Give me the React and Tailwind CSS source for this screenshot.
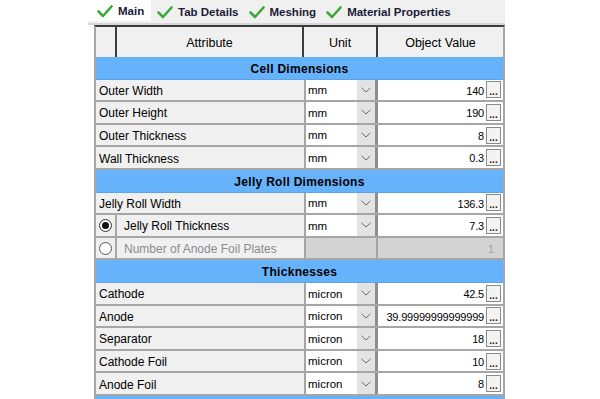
import React from 'react';

const Check = () => (
    <svg width="16" height="13" viewBox="0 0 16 13" className="shrink-0">
        <polyline points="1.5,6.5 6,11 14.5,1.5" fill="none" stroke="#3fa83a" strokeWidth="2.6" strokeLinecap="round" strokeLinejoin="round" />
    </svg>
);

const Chevron = () => (
    <svg width="10" height="6" viewBox="0 0 10 6">
        <polyline points="0.5,0.8 5,5 9.5,0.8" fill="none" stroke="#6b6b6b" strokeWidth="1" />
    </svg>
);

// table rows, top to bottom
const rows = [
    { band: 'Cell Dimensions' },
    { label: 'Outer Width', unit: 'mm', value: '140' },
    { label: 'Outer Height', unit: 'mm', value: '190' },
    { label: 'Outer Thickness', unit: 'mm', value: '8' },
    { label: 'Wall Thickness', unit: 'mm', value: '0.3' },
    { band: 'Jelly Roll Dimensions' },
    { label: 'Jelly Roll Width', unit: 'mm', value: '136.3' },
    { label: 'Jelly Roll Thickness', unit: 'mm', value: '7.3', radio: 'on' },
    { label: 'Number of Anode Foil Plates', value: '1', radio: 'off', disabled: true },
    { band: 'Thicknesses' },
    { label: 'Cathode', unit: 'micron', value: '42.5' },
    { label: 'Anode', unit: 'micron', value: '39.99999999999999' },
    { label: 'Separator', unit: 'micron', value: '18' },
    { label: 'Cathode Foil', unit: 'micron', value: '10' },
    { label: 'Anode Foil', unit: 'micron', value: '8' },
    { band: '' },
];

const tabs = ['Main', 'Tab Details', 'Meshing', 'Material Properties'];

const Row = ({ row }) => {
    if (row.band !== undefined) {
        return (
            <div className="h-[22.6px] shrink-0 bg-[#66b2fb] border-b border-[#5aa4ec] flex items-center justify-center pt-[2px] text-[12px] font-bold text-black tracking-[0.3px]">
                {row.band}
            </div>
        );
    }
    return (
        <div className="h-[22.6px] shrink-0 flex border-b-2 border-[#a6a6a6]">
            {row.radio ? (
                <>
                    <div className="w-[21px] shrink-0 bg-[#f0f0f0] border-r-2 border-[#a6a6a6] flex items-center justify-center">
                        <div className={`w-[13px] h-[13px] rounded-full border bg-white flex items-center justify-center ${row.radio === 'on' ? 'border-[#333]' : 'border-[#555]'}`}>
                            {row.radio === 'on' && <div className="w-[7px] h-[7px] rounded-full bg-[#111]" />}
                        </div>
                    </div>
                    <div className={`w-[187px] shrink-0 bg-[#f0f0f0] pl-[7px] pt-[2px] flex items-center text-[12px] ${row.disabled ? 'text-[#8c8c8c]' : 'text-black'}`}>
                        {row.label}
                    </div>
                </>
            ) : (
                <div className="w-[208px] shrink-0 bg-[#f0f0f0] pl-[3px] pt-[2px] flex items-center text-[12px] text-black">
                    {row.label}
                </div>
            )}
            {row.disabled ? (
                <>
                    <div className="w-[74px] shrink-0 bg-[#d3d3d3] border-l-2 border-r-2 border-[#a6a6a6]" />
                    <div className="flex-1 bg-[#d3d3d3] flex items-center justify-end pr-[9px] pt-[2px] text-[11px] text-[#a3a3a3]">
                        {row.value}
                    </div>
                </>
            ) : (
                <>
                    <div className="w-[74px] shrink-0 flex border-l-2 border-r-[3px] border-l-[#a6a6a6] border-r-[#8e8e8e]">
                        <div className="flex-1 bg-white pl-[2px] pt-[2px] flex items-center text-[11.5px] text-black">{row.unit}</div>
                        <div className="w-[18px] bg-[#e3e3e3] flex items-center justify-center">
                            <Chevron />
                        </div>
                    </div>
                    <div className="flex-1 bg-white flex items-center justify-end pr-[2px] gap-[2px]">
                        <span className="text-[11px] pt-[2px] text-black tracking-[-0.2px]">{row.value}</span>
                        <div className="w-[15px] h-[17px] border border-[#8a8a8a] bg-[#f3f3f3] flex items-end justify-center text-[10px] font-bold leading-[11px] text-[#222]">
                            ...
                        </div>
                    </div>
                </>
            )}
        </div>
    );
};

export default function App() {
    return (
        <div className="w-[600px] h-[399px] bg-white overflow-hidden" style={{ fontFamily: '"Liberation Sans", Arial, sans-serif' }}>
            <div className="ml-[88px] w-[417px] flex flex-col h-full">
                {/* Tab strip */}
                <div className="h-[23px] shrink-0 flex bg-[#f0f0f0] pt-[2px] text-[11.5px] font-bold text-[#1b1b3a]">
                    {tabs.map((t, i) => (
                        <div key={t} className={`flex items-center gap-[5px] h-full ${i === 0 ? 'bg-white pl-[9px] pr-[6px] w-[63px] -mt-[2px] pt-[2px] h-[23px]' : 'pl-[6px] pr-[4px]'}`}>
                            <Check />
                            <span>{t}</span>
                        </div>
                    ))}
                </div>
                <div className="h-[2px] shrink-0 bg-[#d7d7d7]" />

                {/* Table */}
                <div className="ml-[6px] flex-1 flex flex-col border-l-2 border-r-2 border-[#a6a6a6] border-t-2 border-t-[#3c3c3c] overflow-hidden">
                    <div className="h-[30px] shrink-0 flex bg-[#f0f0f0] text-[12.5px] text-black">
                        <div className="w-[21px] shrink-0 border-r-2 border-[#3c3c3c]" />
                        <div className="w-[187px] shrink-0 flex items-center justify-center pt-[2px] border-r-2 border-[#3c3c3c]">Attribute</div>
                        <div className="w-[74px] shrink-0 flex items-center justify-center pt-[2px] border-r-2 border-[#3c3c3c]">Unit</div>
                        <div className="flex-1 flex items-center justify-center pt-[2px]">Object Value</div>
                    </div>
                    {rows.map((r, i) => (
                        <Row key={i} row={r} />
                    ))}
                </div>
            </div>
        </div>
    );
}
